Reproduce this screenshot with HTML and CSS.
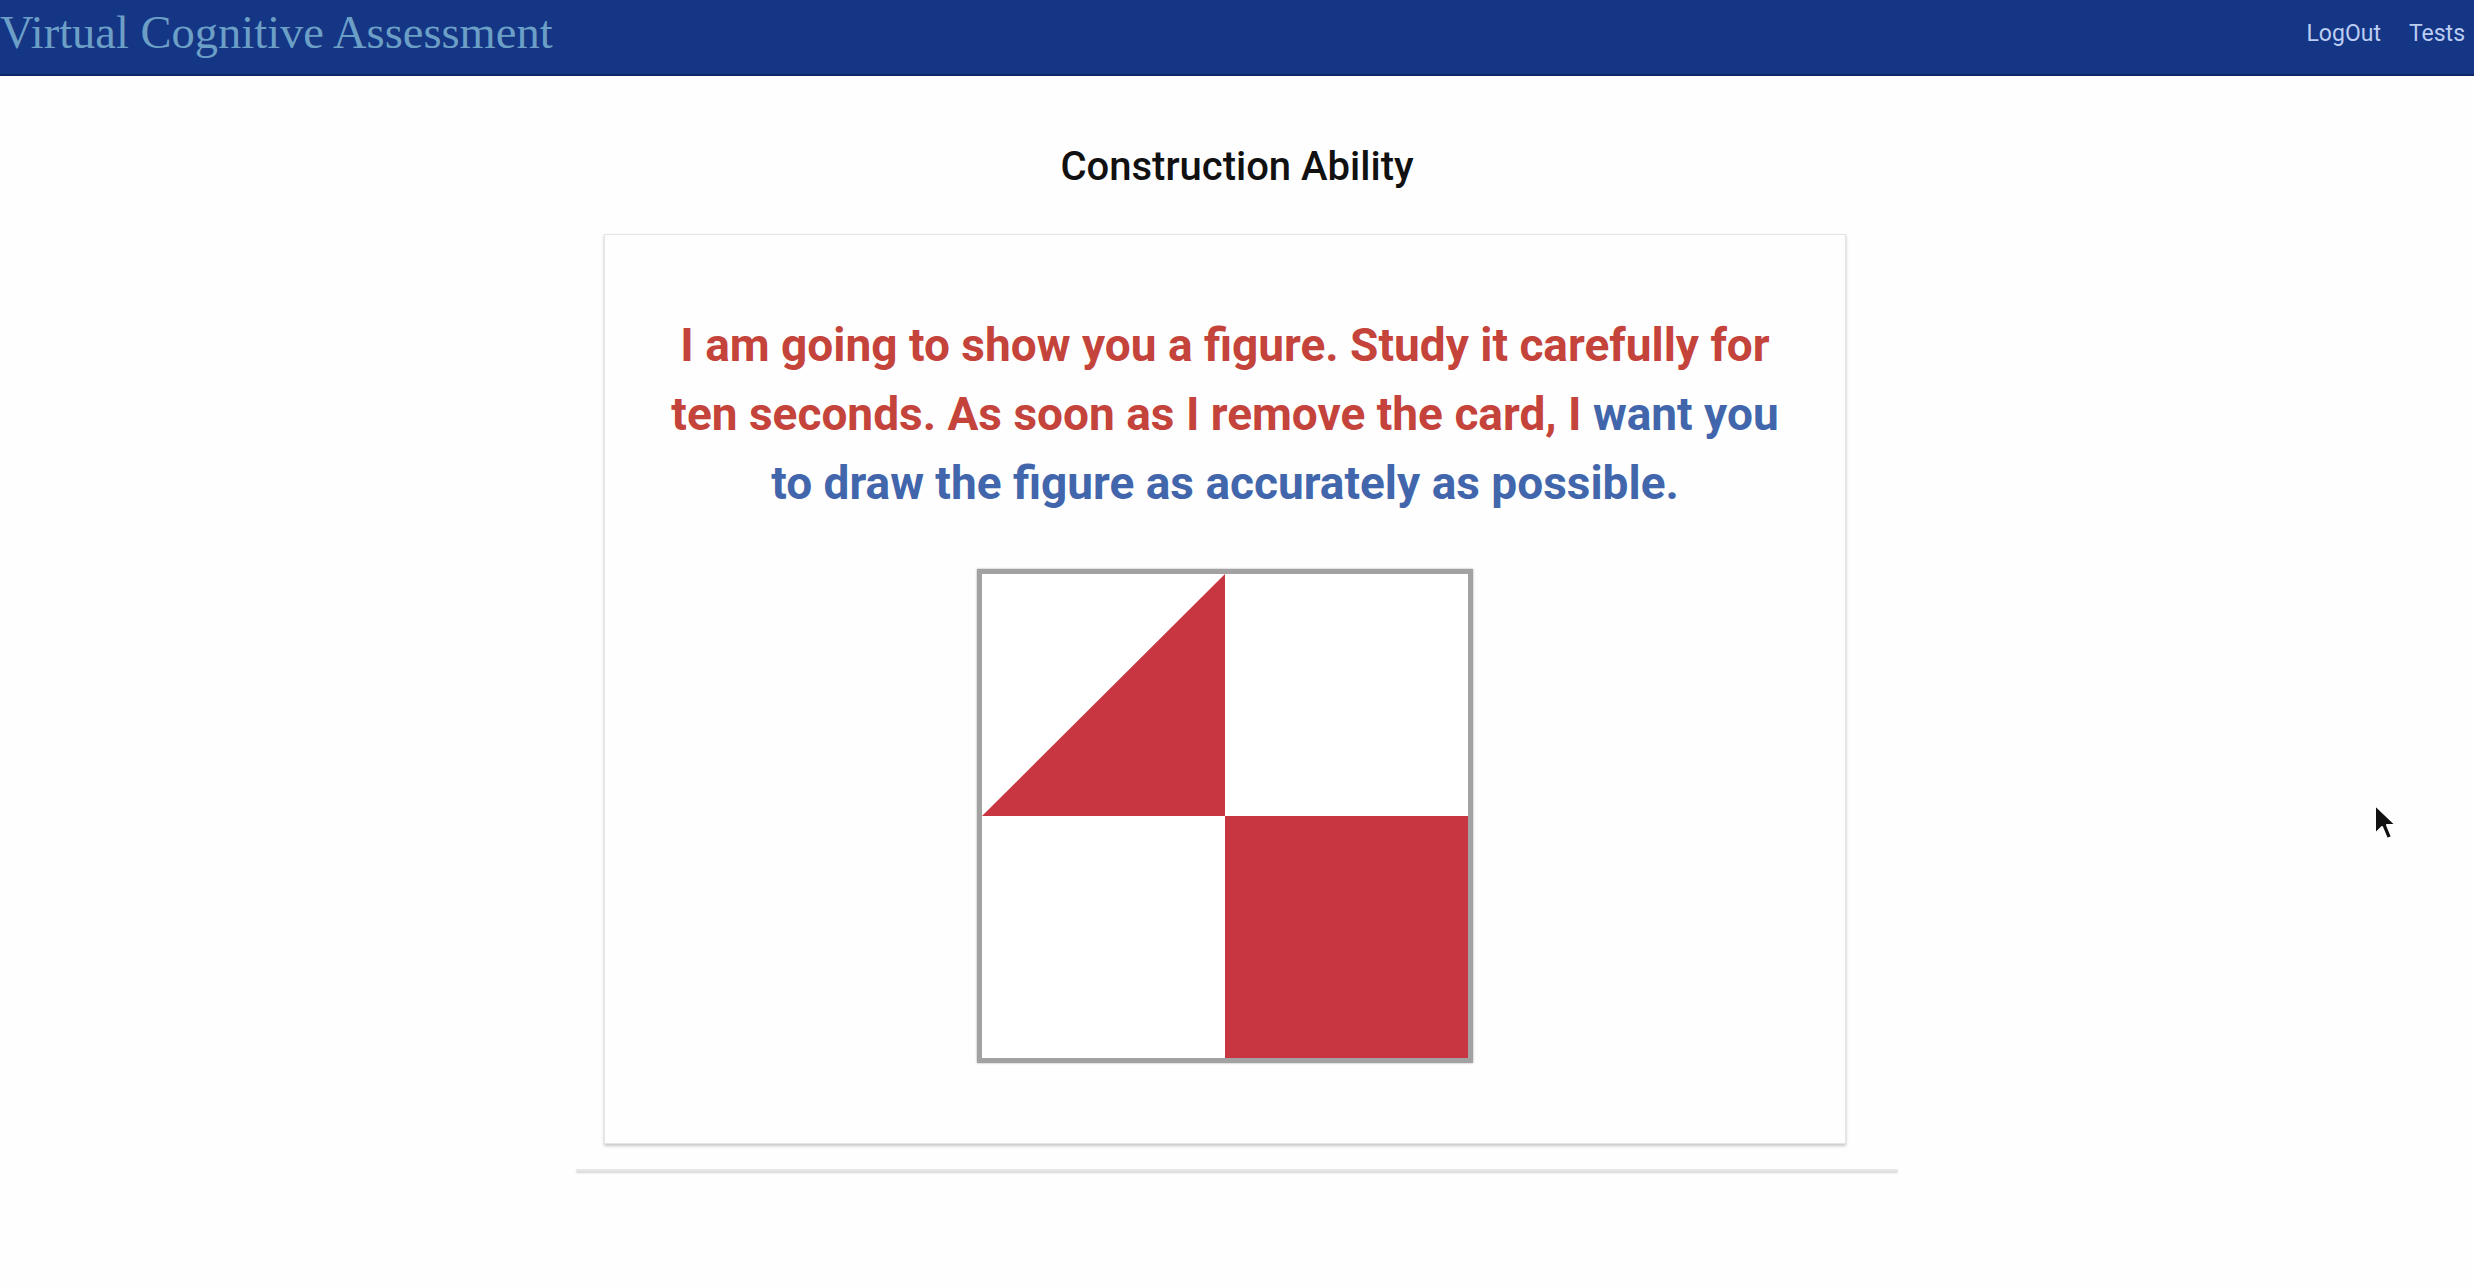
FILE: index.html
```html
<!DOCTYPE html>
<html lang="en">
<head>
<meta charset="utf-8">
<title>Virtual Cognitive Assessment</title>
<link rel="stylesheet" href="styles.css">
</head>
<body>
<nav class="navbar">
  <a class="brand" href="#">Virtual Cognitive Assessment</a>
  <div class="nav-links">
    <a class="nav-link" href="#">LogOut</a>
    <a class="nav-link" href="#">Tests</a>
  </div>
</nav>
<main class="page">
  <h1 class="page-title">Construction Ability</h1>
  <div class="container">
    <section class="card">
      <p class="instruction"><span class="red">I am going to show you a figure. Study it carefully for</span><br><span class="red">ten seconds. As soon as I remove the card, I</span> <span class="blue">want you</span><br><span class="blue">to draw the figure as accurately as possible.</span></p>
      <div class="figure">
        <svg class="figure-svg" viewBox="0 0 2 2" preserveAspectRatio="none" aria-hidden="true">
          <rect x="0" y="0" width="2" height="2" fill="#ffffff"/>
          <polygon points="0,1 1,0 1,1" fill="#c83741"/>
          <rect x="1" y="1" width="1" height="1" fill="#c83741"/>
        </svg>
      </div>
    </section>
    <div class="divider"></div>
  </div>
</main>
<svg class="cursor" viewBox="0 0 26 40" aria-hidden="true">
  <path d="M2 2 L2 31 L9 24 L14 36 L19 34 L14 22 L23 22 Z" fill="#111" stroke="#fff" stroke-width="2" stroke-linejoin="round"/>
</svg>
</body>
</html>
```
FILE: styles.css
```css
html, body {
  margin: 0;
  padding: 0;
}
body {
  background: #fefefe;
  font-family: Roboto, "Noto Sans", Arial, sans-serif;
  min-height: 1286px;
  position: relative;
}
.navbar {
  height: 74px;
  background: #153585;
  border-bottom: 2px solid #0e276a;
  display: flex;
  justify-content: space-between;
  align-items: flex-start;
}
.brand {
  font-family: "Liberation Serif", "Times New Roman", serif;
  font-size: 46.5px;
  line-height: 46px;
  color: #6c9fc6;
  text-decoration: none;
  padding-top: 10px;
}
.nav-links {
  display: flex;
  gap: 28px;
  padding: 22px 9px 0 0;
}
.nav-link {
  font-family: Roboto, sans-serif;
  font-size: 23px;
  line-height: 23px;
  color: #bccdf2;
  text-decoration: none;
}
.page {
  padding-top: 71px;
}
.page-title {
  margin: 0;
  text-align: center;
  font-family: Roboto, sans-serif;
  font-weight: 500;
  font-size: 40px;
  line-height: 40px;
  color: #111;
}
.container {
  width: 1322px;
  margin: 47px auto 0;
  display: flex;
  flex-direction: column;
}
.card {
  width: 1240px;
  margin-left: 28px;
  height: 908px;
  border: 1px solid #e4e4e4;
  box-shadow: 0 2px 3px rgba(0, 0, 0, 0.22);
  background: #fefefe;
  display: flex;
  flex-direction: column;
  align-items: center;
  box-sizing: content-box;
}
.instruction {
  margin: 76px 0 0;
  width: 1180px;
  text-align: center;
  font-family: Roboto, sans-serif;
  font-weight: 700;
  font-size: 46px;
  line-height: 69px;
  white-space: nowrap;
}
.red {
  color: #c4433b;
}
.blue {
  color: #4266ab;
}
.figure {
  margin-top: 51px;
  width: 486px;
  height: 484px;
  border: 5px solid #a2a2a2;
  box-shadow: 0 0 2px rgba(0, 0, 0, 0.35);
  background: #fff;
}
.figure-svg {
  display: block;
  width: 100%;
  height: 100%;
}
.divider {
  margin-top: 25px;
  height: 2px;
  background: #e6e6e6;
  box-shadow: 0 2px 2px rgba(0, 0, 0, 0.18);
  border-radius: 2px;
}
.cursor {
  position: absolute;
  left: 2373px;
  top: 803px;
  width: 26px;
  height: 40px;
}
```
